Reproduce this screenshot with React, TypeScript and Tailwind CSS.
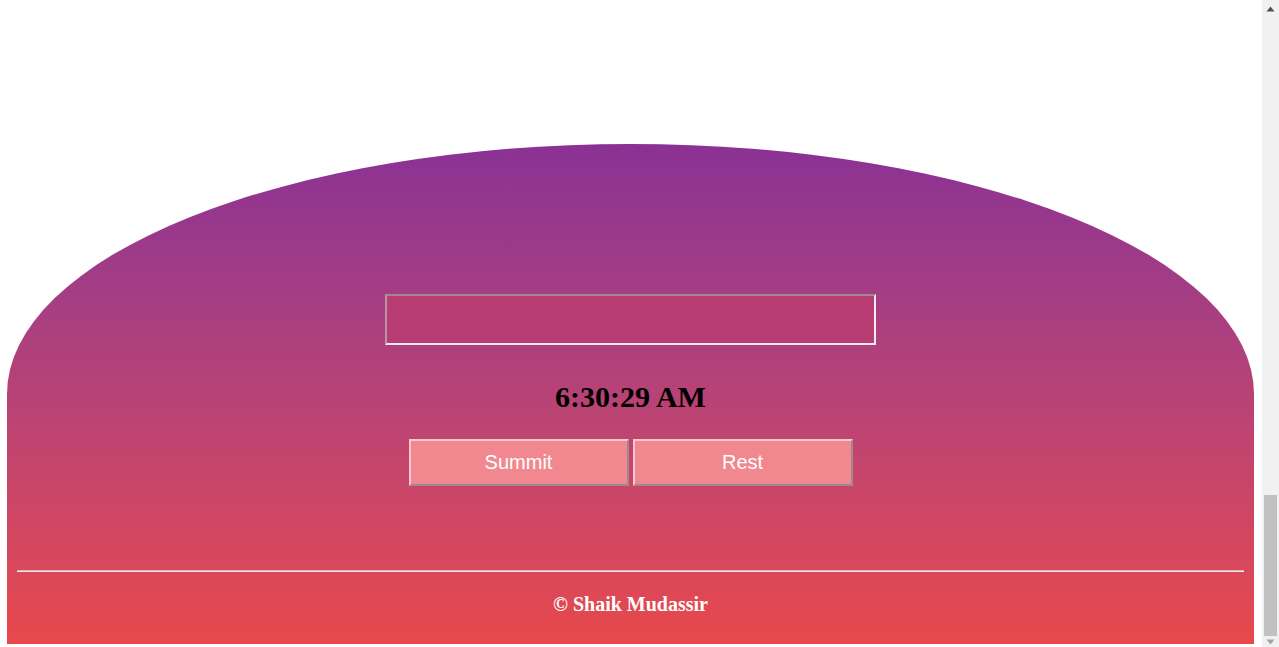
export default function App() {
  return (
    <div className="flex h-[647px] w-full overflow-hidden bg-white">
      {/* page */}
      <div className="flex flex-1 flex-col">
        <div className="h-[144px]" />
        <div className="ml-[7px] mr-[8px] flex h-[500px] flex-col items-center rounded-t-[50%_250px] bg-gradient-to-b from-[#8a3194] to-[#e8484a] pt-[150px]">
          <input
            type="text"
            className="h-[51px] w-[491px] border-2 border-t-[#a3878f] border-l-[#b795a6] border-r-[#f4eaef] border-b-[#f4eaef] bg-[#b73d73] outline-none"
          />
          <h2 className="mt-[36px] text-[30px] font-bold leading-[32px] text-black [font-family:'Liberation_Serif',serif]">
            6:30:29 AM
          </h2>
          <div className="mt-[26px] flex gap-[4px]">
            <button className="h-[47px] w-[220px] border-2 border-t-[#f7c9cc] border-l-[#f7c9cc] border-r-[#a0888c] border-b-[#a0888c] bg-[#f2888f] pb-[2px] text-[20px] text-white [font-family:'Liberation_Sans',sans-serif]">
              Summit
            </button>
            <button className="h-[47px] w-[220px] border-2 border-t-[#f7c9cc] border-l-[#f7c9cc] border-r-[#a0888c] border-b-[#a0888c] bg-[#f2888f] pb-[2px] text-[20px] text-white [font-family:'Liberation_Sans',sans-serif]">
              Rest
            </button>
          </div>
          <div className="mt-[84px] h-[2px] w-[1227px] border-t border-t-[#cdb8bc] bg-[#f0e6e6]" />
          <p className="mt-[20px] text-[20px] font-bold leading-[24px] text-white [font-family:'Liberation_Serif',serif]">
            © Shaik Mudassir
          </p>
        </div>
      </div>
      {/* scrollbar */}
      <div className="flex w-[17px] flex-col items-center bg-[#f1f1f1]">
        <div className="flex h-[17px] items-center justify-center">
          <svg width="9" height="6" viewBox="0 0 9 6">
            <path d="M4.5 0.5 L8.5 5.5 L0.5 5.5 Z" fill="#505050" />
          </svg>
        </div>
        <div className="flex-1" />
        <div className="h-[141px] w-[13px] bg-[#c1c1c1]" />
        <div className="flex h-[11px] items-center justify-center">
          <svg width="9" height="6" viewBox="0 0 9 6">
            <path d="M0.5 0.5 L8.5 0.5 L4.5 5.5 Z" fill="#a3a3a3" />
          </svg>
        </div>
      </div>
    </div>
  )
}
